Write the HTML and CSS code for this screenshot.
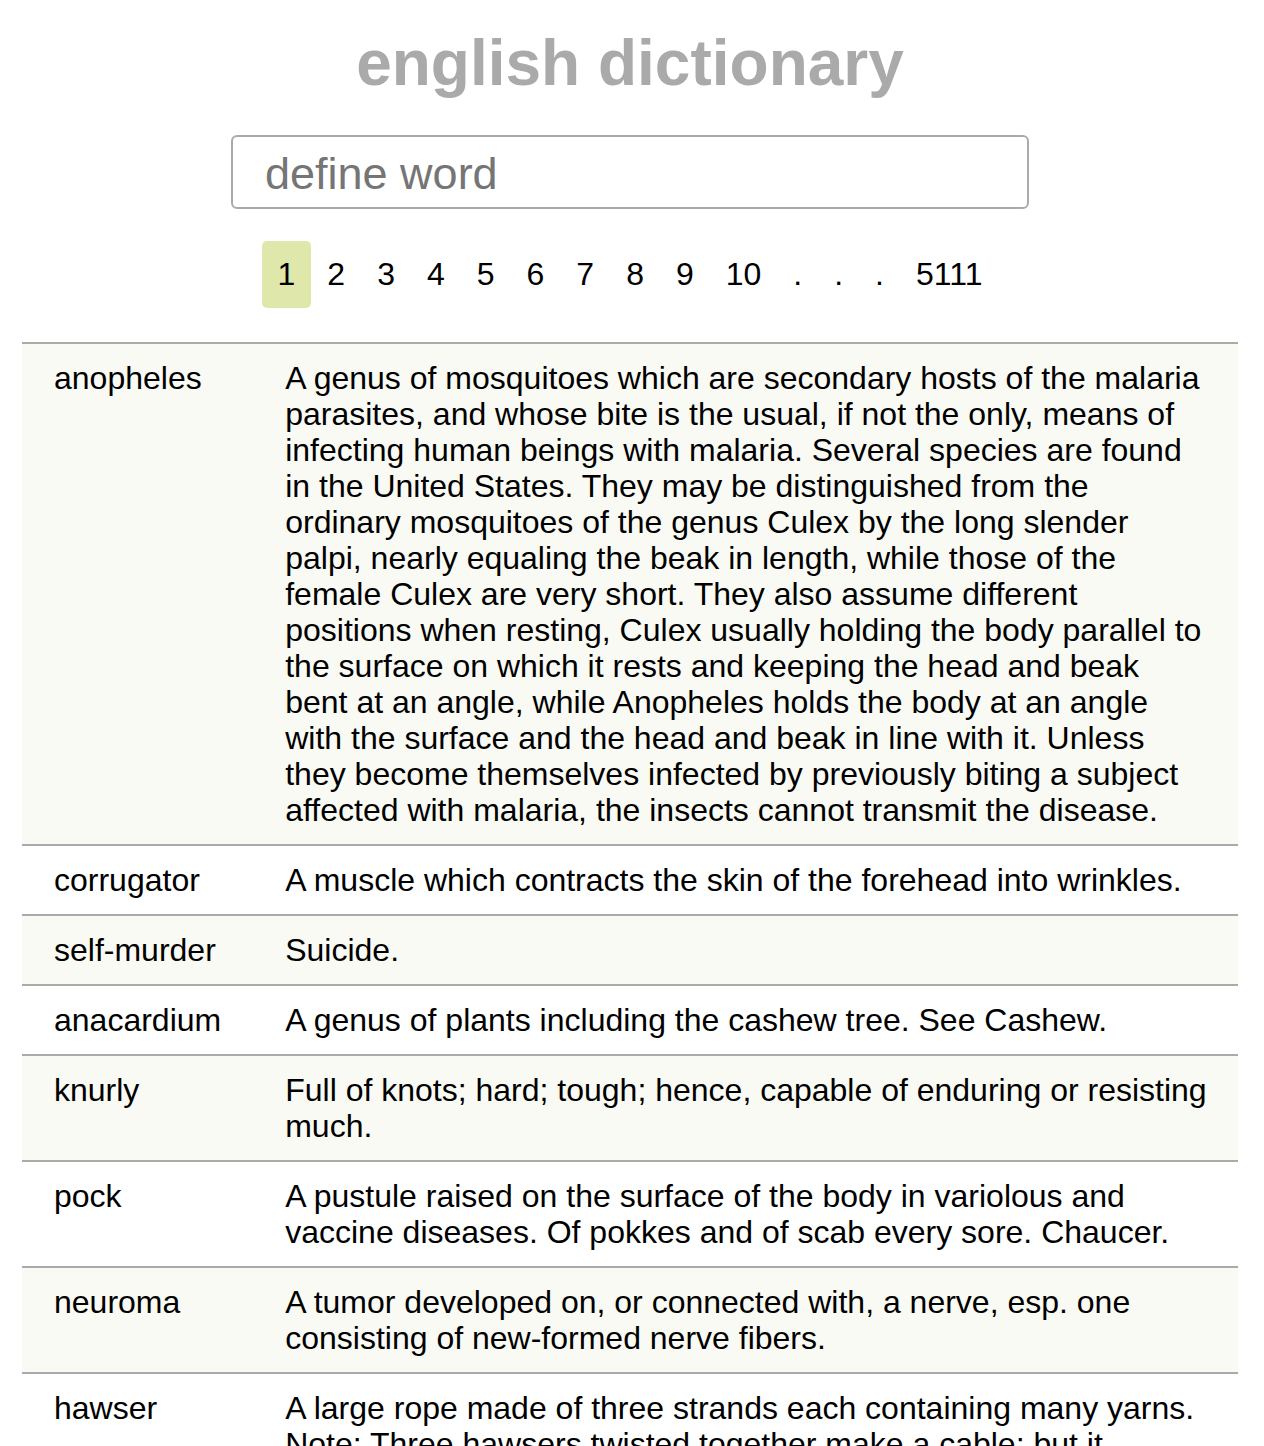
FILE: index.html
```html
<!DOCTYPE html>
<html lang="en">
<head>
<meta charset="utf-8">
<title>english dictionary</title>
<link rel="stylesheet" href="styles.css">
</head>
<body>
<div class="page">
  <h1 class="title">english dictionary</h1>
  <div class="search">
    <input class="search-input" type="text" placeholder="define word">
  </div>
  <nav class="pager">
    <a class="pg active">1</a><a class="pg">2</a><a class="pg">3</a><a class="pg">4</a><a class="pg">5</a><a class="pg">6</a><a class="pg">7</a><a class="pg">8</a><a class="pg">9</a><a class="pg">10</a><span class="pg">.</span><span class="pg">.</span><span class="pg">.</span><a class="pg">5111</a>
  </nav>
  <table class="words">
    <tbody>
      <tr><td class="word">anopheles</td><td class="def">A genus of mosquitoes which are secondary hosts of the malaria parasites, and whose bite is the usual, if not the only, means of infecting human beings with malaria. Several species are found in the United States. They may be distinguished from the ordinary mosquitoes of the genus Culex by the long slender palpi, nearly equaling the beak in length, while those of the female Culex are very short. They also assume different positions when resting, Culex usually holding the body parallel to the surface on which it rests and keeping the head and beak bent at an angle, while Anopheles holds the body at an angle with the surface and the head and beak in line with it. Unless they become themselves infected by previously biting a subject affected with malaria, the insects cannot transmit the disease.</td></tr>
      <tr><td class="word">corrugator</td><td class="def">A muscle which contracts the skin of the forehead into wrinkles.</td></tr>
      <tr><td class="word">self-murder</td><td class="def">Suicide.</td></tr>
      <tr><td class="word">anacardium</td><td class="def">A genus of plants including the cashew tree. See Cashew.</td></tr>
      <tr><td class="word">knurly</td><td class="def">Full of knots; hard; tough; hence, capable of enduring or resisting much.</td></tr>
      <tr><td class="word">pock</td><td class="def">A pustule raised on the surface of the body in variolous and vaccine diseases. Of pokkes and of scab every sore. Chaucer.</td></tr>
      <tr><td class="word">neuroma</td><td class="def">A tumor developed on, or connected with, a nerve, esp. one consisting of new-formed nerve fibers.</td></tr>
      <tr><td class="word">hawser</td><td class="def">A large rope made of three strands each containing many yarns. Note: Three hawsers twisted together make a cable; but it frequently means any large rope used in warping, mooring, or towing.</td></tr>
    </tbody>
  </table>
</div>
</body>
</html>
```
FILE: styles.css
```css
html, body {
  margin: 0;
  padding: 0;
  background: #ffffff;
}

body {
  font-family: "Liberation Sans", Arial, Helvetica, sans-serif;
  color: #000;
}

.page {
  width: 1216px;
  margin-left: 22px;
  padding-top: 27px;
}

.title {
  margin: 0;
  font-size: 64px;
  line-height: 72px;
  font-weight: bold;
  color: #aaaaaa;
  text-align: center;
}

.search {
  display: flex;
  justify-content: center;
  margin-top: 36px;
}

.search-input {
  box-sizing: border-box;
  width: 798px;
  height: 74px;
  border: 2px solid #aaaaaa;
  border-radius: 6px;
  padding: 4px 32px 0;
  font-family: "Liberation Sans", Arial, sans-serif;
  font-size: 45px;
  color: #222;
  outline: none;
}

.search-input::placeholder {
  color: #757575;
}

.pager {
  display: flex;
  justify-content: center;
  margin-top: 32px;
}

.pg {
  display: block;
  padding: 15px 16px 16px;
  font-size: 32px;
  line-height: 36px;
  color: #000;
  border-radius: 5px;
}

.pg.active {
  background: #dfe8aa;
}

.words {
  width: 100%;
  margin-top: 34px;
  border-collapse: collapse;
  font-size: 32px;
  line-height: 36px;
}

.words tr {
  border-top: 2px solid #aaaaaa;
}

.words tr:nth-child(odd) {
  background: #fafaf5;
}

.words td {
  vertical-align: top;
  padding: 16px 32px;
}

.words .word {
  width: 167px;
  white-space: nowrap;
}

.words .def {
  padding-right: 30px;
}
```
